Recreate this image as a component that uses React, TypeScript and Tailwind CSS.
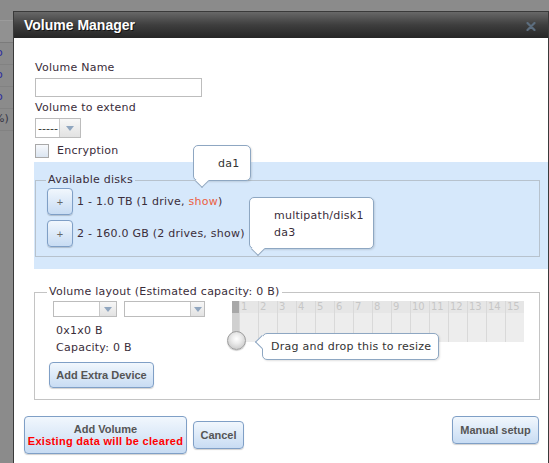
import React from 'react'

const sans = "font-['DejaVu_Sans',Verdana,sans-serif]"
const btn =
  "rounded-[4px] border border-[#7f9fc6] bg-linear-to-b from-[#f1f7fd] to-[#c8dcf3] font-['Liberation_Sans',Arial,sans-serif] font-bold text-[11px] text-[#555] tracking-normal shadow-[0_1px_1px_rgba(0,0,0,0.18)]"

const Arrow: React.FC = () => (
  <svg width="8" height="5" viewBox="0 0 8 5">
    <path d="M0 0 L8 0 L4 5 Z" fill="#90a6bf" />
  </svg>
)

const SelectBox: React.FC<{ width: string; height: string; text?: string; arrowW: string }> = ({
  width,
  height,
  text,
  arrowW,
}) => (
  <div className={`${width} ${height} flex border border-[#bcbcbc] bg-white`}>
    <div className="flex-1 min-w-0 flex items-center pl-[2px] text-[11px] leading-none tracking-normal whitespace-nowrap overflow-hidden text-[#333]">
      {text}
    </div>
    <div
      className={`${arrowW} shrink-0 flex items-center justify-center border-l border-[#c8c8c8] bg-linear-to-b from-[#f7f7f7] to-[#e2e2e2]`}
    >
      <Arrow />
    </div>
  </div>
)

export default function App() {
  const cols = Array.from({ length: 15 }, (_, i) => i + 1)

  return (
    <div className={`w-[549px] h-[463px] bg-[#8b8b8b] flex overflow-hidden ${sans}`}>
      {/* page behind the overlay */}
      <div className="w-[13px] shrink-0 flex flex-col overflow-hidden text-[11px]">
        <div className="h-[21px] border-b border-[#9b9b9b]" />
        <div className="h-[22px] bg-[#919191] border-b border-[#7b7b7b]" />
        {['o', 'o', 'o'].map((t, i) => (
          <div key={i} className="h-[22px] border-b border-[#828282] flex items-center">
            <span className="-ml-[4px] text-[#2d2da0]">{t}</span>
          </div>
        ))}
        <div className="h-[22px] border-b border-[#828282] flex items-center">
          <span className="-ml-[6px] text-[#363646] whitespace-nowrap">%)</span>
        </div>
      </div>

      {/* dialog */}
      <div className="mt-[11px] w-[536px] shrink-0 border-x border-t border-[#3a3a3a] bg-white flex flex-col">
        <div className="h-[26px] flex items-center justify-between pl-[10px] pr-[12px] bg-linear-to-b from-[#686868] via-[#3e3e3e] to-[#262626]">
          <span className="font-['Liberation_Sans',Arial,sans-serif] font-bold text-[14px] text-white [text-shadow:1px_1px_0_rgba(0,0,0,0.6)]">
            Volume Manager
          </span>
          <svg width="10" height="9" viewBox="0 0 10 9" className="mt-[3px]">
            <path d="M1.5 1 L8.5 8 M8.5 1 L1.5 8" stroke="#5c6d7e" strokeWidth="2.2" strokeLinecap="round" />
          </svg>
        </div>

        <div className="pt-[23px] pl-[21px] pr-[8px] text-[11px] leading-[14px] tracking-[0.25px] text-[#3a2d3a]">
          <div>Volume Name</div>
          <div className="mt-[3px] w-[167px] h-[19px] border border-[#bdbdbd]" />
          <div className="mt-[4px]">Volume to extend</div>
          <div className="mt-[3px]">
            <SelectBox width="w-[46px]" height="h-[20px]" text="-----" arrowW="w-[21px]" />
          </div>
          <div className="mt-[6px] h-[14px] flex items-center">
            <div className="w-[14px] h-[14px] border border-[#a9a9a9] bg-linear-to-b from-[#f7f9fc] to-[#dbe5f1]" />
            <span className="ml-[8px]">Encryption</span>
          </div>

          {/* drop area */}
          <div className="relative mt-[4px] -ml-[1px] -mr-[8px] pt-[11px] pb-[12px] bg-[#d6e8fb]">
            <fieldset className="ml-[1px] mr-[8px] border border-[#b7c2cd] pl-[11px] pt-[1px] pb-[9px]">
              <legend className="-ml-[1px] px-[2px]">Available disks</legend>
              <div className="flex items-center gap-[4px]">
                <button className={`${btn} w-[26px] h-[27px] font-normal text-[#666]`}>+</button>
                <span>
                  1 - 1.0 TB (1 drive, <span className="text-[#ec6042]">show</span>)
                </span>
              </div>
              <div className="mt-[5px] flex items-center gap-[4px]">
                <button className={`${btn} w-[26px] h-[27px] font-normal text-[#666]`}>+</button>
                <span>2 - 160.0 GB (2 drives, show)</span>
              </div>
            </fieldset>

            <div className="absolute left-[215px] top-[95px] w-[127px] h-[2px] bg-[#d6e8fb]" />

            <div className="absolute left-[159px] -top-[17px] w-[58px] h-[36px] rounded-[5px] border border-[#8ea7c2] bg-white pl-[24px] pt-[9px] leading-[17px] text-[#333] shadow-[1px_1px_2px_rgba(0,0,0,0.12)]">
              da1
              <div className="absolute left-[3px] -bottom-[6px] w-[10px] h-[10px] rotate-45 border-r border-b border-[#8ea7c2] bg-white" />
            </div>

            <div className="absolute left-[215px] top-[35px] w-[125px] h-[52px] rounded-[5px] border border-[#8ea7c2] bg-white pl-[24px] pt-[9px] leading-[17px] shadow-[1px_1px_2px_rgba(0,0,0,0.12)]">
              <div>multipath/disk1</div>
              <div>da3</div>
              <div className="absolute left-[3px] -bottom-[6px] w-[10px] h-[10px] rotate-45 border-r border-b border-[#8ea7c2] bg-white" />
            </div>
          </div>

          {/* volume layout */}
          <fieldset className="mt-[16px] -ml-[1px] border border-[#c4c4c4] pt-[2px] pb-[11px]">
            <legend className="ml-[12px] px-[2px]">Volume layout (Estimated capacity: 0 B)</legend>
            <div className="flex items-start">
              <div className="w-[197px] shrink-0 pl-[14px]">
                <div className="ml-[4px] flex gap-[7px]">
                  <SelectBox width="w-[64px]" height="h-[16px]" arrowW="w-[17px]" />
                  <SelectBox width="w-[81px]" height="h-[16px]" arrowW="w-[14px]" />
                </div>
                <div className="ml-[7px] mt-[7px]">0x1x0 B</div>
                <div className="ml-[7px] mt-[3px]">Capacity: 0 B</div>
                <button className={`${btn} mt-[7px] w-[105px] h-[26px]`}>Add Extra Device</button>
              </div>

              <div className="relative flex h-[41px] tracking-normal">
                <div className="w-[7px] flex flex-col">
                  <div className="h-[12px] bg-[#a8a8a8]" />
                  <div className="flex-1 bg-[#d0d0d0]" />
                </div>
                {cols.map((n) => (
                  <div key={n} className="w-[19px] flex flex-col border-l border-[#d9d9d9]">
                    <div className="h-[12px] bg-[#e6e6e6] pl-[1px] text-[10px] leading-[12px] text-[#c6c6c6]">
                      {n}
                    </div>
                    <div className="flex-1 bg-[#ededed]" />
                  </div>
                ))}

                <div className="absolute -left-[5px] top-[30px] w-[19px] h-[19px] rounded-full border border-[#9d9d9d] bg-[radial-gradient(circle_at_50%_40%,#ffffff_0%,#ececec_35%,#bcbcbc_100%)] shadow-[0_1px_1px_rgba(0,0,0,0.2)]" />

                <div className="absolute left-[30px] top-[32px] w-[177px] h-[27px] rounded-[5px] border border-[#8ea7c2] bg-white pl-[8px] leading-[25px] whitespace-nowrap tracking-[0.25px] text-[#333] shadow-[1px_1px_2px_rgba(0,0,0,0.12)]">
                  Drag and drop this to resize
                  <div className="absolute -left-[6px] top-[3px] w-[10px] h-[10px] rotate-45 border-l border-b border-[#8ea7c2] bg-white" />
                </div>
              </div>
            </div>
          </fieldset>

          {/* actions */}
          <div className="mt-[16px] -ml-[11px] mr-[1px] flex items-start">
            <button className={`${btn} w-[163px] h-[38px] flex flex-col items-center justify-center leading-[12px]`}>
              <span>Add Volume</span>
              <span className="text-[#f00] tracking-[0.3px]">Existing data will be cleared</span>
            </button>
            <button className={`${btn} ml-[6px] mt-[5px] w-[51px] h-[28px]`}>Cancel</button>
            <button className={`${btn} ml-auto w-[87px] h-[28px]`}>Manual setup</button>
          </div>
        </div>
      </div>
    </div>
  )
}
